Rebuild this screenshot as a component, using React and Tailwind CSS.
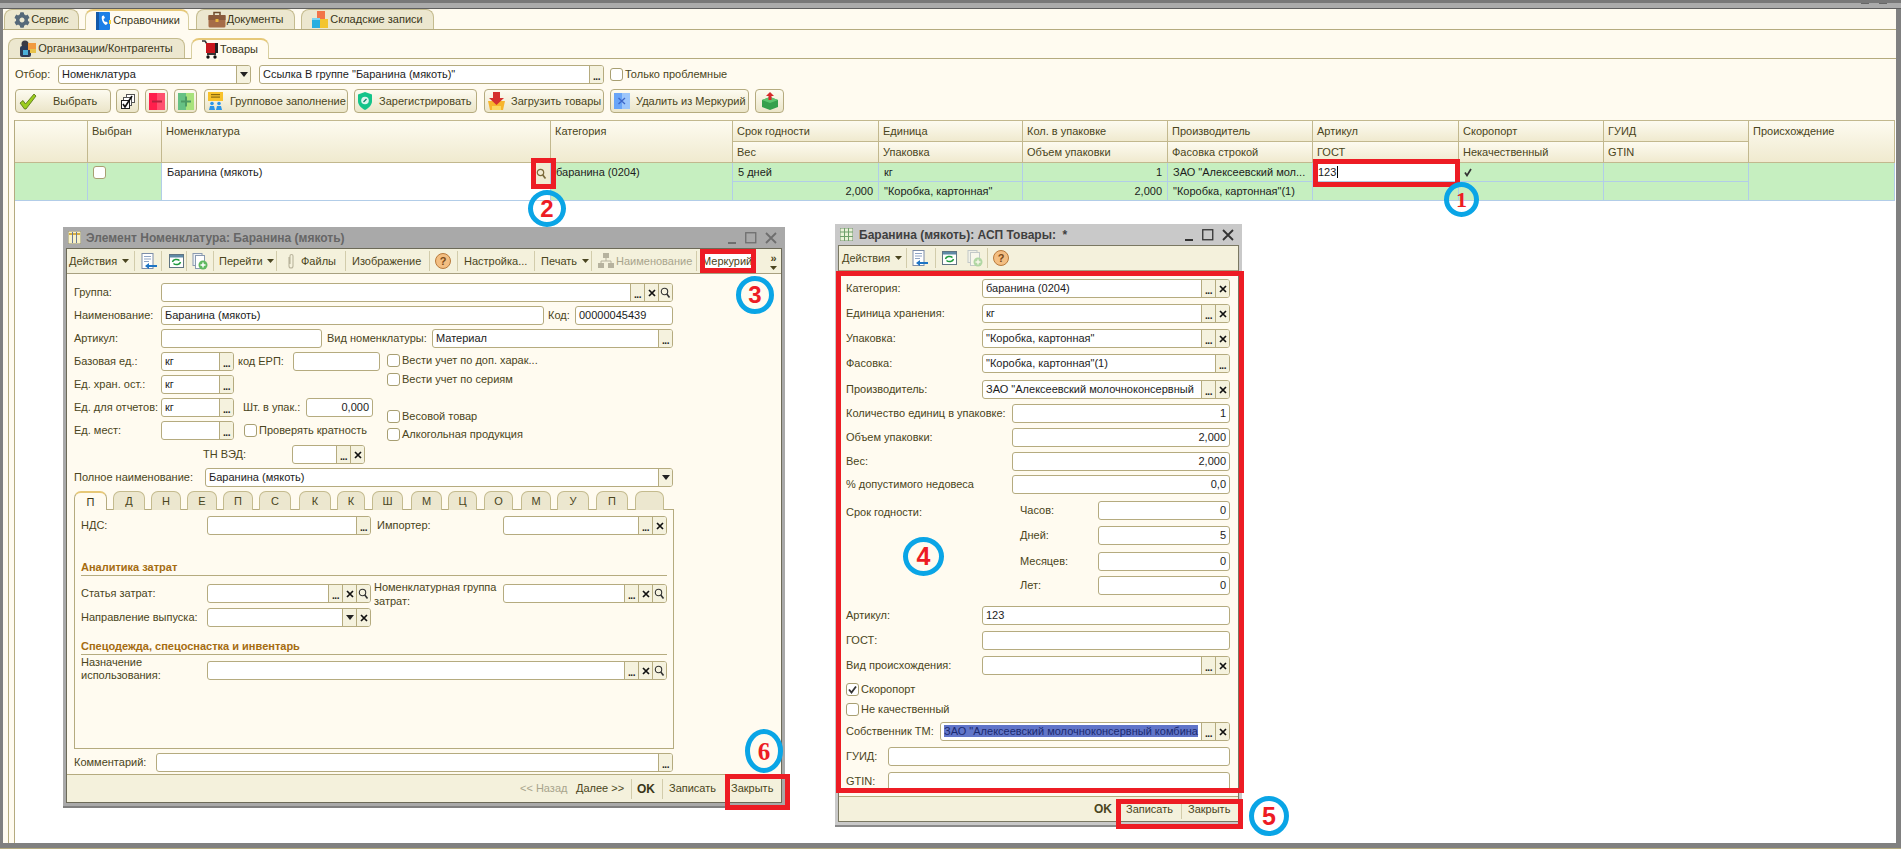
import React from "react";
import { FaCog } from "react-icons/fa";

const LBL = "text-[#4a4520] whitespace-nowrap leading-[19px]";

const Dots = () => (
  <div className="w-[14px] h-full border-l border-[#b5ab7f] bg-[#f5f2de] text-[#222] text-[10px] leading-[21px] text-center font-bold tracking-[-0.5px]">...</div>
);
const Cross = () => (
  <div className="w-[14px] h-full border-l border-[#b5ab7f] bg-[#f5f2de] flex items-center justify-center">
    <svg width="8" height="8" viewBox="0 0 8 8"><path d="M1 1L7 7M7 1L1 7" stroke="#111" strokeWidth="1.7" /></svg>
  </div>
);
const Lens = () => (
  <div className="w-[14px] h-full border-l border-[#b5ab7f] bg-[#f5f2de] flex items-center justify-center">
    <svg width="11" height="12" viewBox="0 0 11 12"><circle cx="4.5" cy="4.5" r="3.2" fill="none" stroke="#333" strokeWidth="1.1" /><path d="M6.8 7L9.5 10.5" stroke="#333" strokeWidth="1.6" /></svg>
  </div>
);
const Arrow = () => (
  <div className="w-[14px] h-full border-l border-[#b5ab7f] bg-[#f5f2de] flex items-center justify-center">
    <svg width="8" height="5" viewBox="0 0 8 5"><path d="M0 0H8L4 5Z" fill="#222" /></svg>
  </div>
);
const BTN = { d: Dots, x: Cross, l: Lens, a: Arrow };

function Field({ w, btns = "", right, children, sel }) {
  return (
    <div className={`${w} h-[19px] flex shrink-0 rounded-[3px] border border-[#b5ab7f] bg-white overflow-hidden`}>
      <div className={`flex-1 min-w-0 px-[3px] leading-[17px] text-[#1c1c1c] whitespace-nowrap overflow-hidden ${right ? "text-right" : ""}`}>
        {sel ? <span className="bg-[#6175c9] text-[#1b2a70]">{children}</span> : children}
      </div>
      {btns.split("").map((b, i) => {
        const C = BTN[b];
        return <C key={i} />;
      })}
    </div>
  );
}

const Box = ({ checked }) => (
  <span className="w-[13px] h-[13px] shrink-0 rounded-[3px] border border-[#a89f72] bg-white flex items-center justify-center">
    {checked && <svg width="9" height="9" viewBox="0 0 9 9"><path d="M1 4.5L3.5 7.5L8 1.5" fill="none" stroke="#333" strokeWidth="1.8" /></svg>}
  </span>
);
const Check = ({ mt = "", checked, children }) => (
  <div className={`flex items-center h-[13px] gap-[2px] ${mt}`}>
    <Box checked={checked} />
    <span className="text-[#4a4520] whitespace-nowrap">{children}</span>
  </div>
);

/* ---------- icons ---------- */
const IPhonebook = () => (
  <svg width="18" height="18" viewBox="0 0 18 18"><rect x="2" y="0" width="14" height="18" rx="1" fill="#1d7fe6" /><rect x="2" y="0" width="3" height="18" fill="#1259a8" /><path d="M8 4c-1 3 1 8 4 9l2-2-2-1.500-1 .5c-1-1-1.500-2-1.500-3L11 6 9.800 3.500Z" fill="#fff" /><rect x="15" y="8" width="2" height="4" fill="#f3d23a" /></svg>
);
const IBrief = () => (
  <svg width="18" height="17" viewBox="0 0 18 17"><path d="M6 4V1.500h6V4" fill="none" stroke="#6d4a2c" strokeWidth="1.500" /><rect x="0.500" y="4" width="17" height="12.500" rx="1.500" fill="#a56c48" /><rect x="0.500" y="4" width="17" height="5" fill="#8a5a3c" /><rect x="7.500" y="8" width="3" height="3" fill="#e9b63f" /></svg>
);
const IBlocks = () => (
  <svg width="17" height="17" viewBox="0 0 17 17"><rect x="5" y="0" width="8" height="8" fill="#f2744a" /><rect x="0" y="7" width="8" height="10" fill="#25aee0" /><rect x="8" y="8" width="8" height="9" fill="#f3c52f" /><rect x="0" y="7" width="8" height="2" fill="#7fd4f0" /></svg>
);
const IOrg = () => (
  <svg width="17" height="17" viewBox="0 0 17 17"><circle cx="5" cy="4" r="3.500" fill="#3a3a44" /><rect x="0" y="6" width="11" height="11" rx="2" fill="#2d3a55" /><rect x="8" y="3" width="8" height="7" fill="#f19a3e" /><rect x="3" y="10" width="5" height="5" fill="#4ab0d8" /><rect x="10" y="9" width="6" height="4" fill="#e8c24a" /></svg>
);
const ICart = () => (
  <svg width="17" height="19" viewBox="0 0 17 19"><path d="M0 1H3L5 4" fill="none" stroke="#333" strokeWidth="1.500" /><rect x="4" y="3" width="11" height="10" fill="#c8161c" /><rect x="13" y="3" width="3" height="10" fill="#222" /><rect x="5" y="13" width="9" height="2" fill="#333" /><circle cx="6" cy="17" r="1.700" fill="#111" /><circle cx="13" cy="17" r="1.700" fill="#111" /></svg>
);
const IOk = () => (
  <svg width="18" height="17" viewBox="0 0 18 17"><path d="M1 10L4 7.500L6.500 11L15 1L17 3L7 16H5.500Z" fill="#9ccc1e" stroke="#4f6d10" strokeWidth="0.800" /></svg>
);
const IMulti = () => (
  <svg width="16" height="17" viewBox="0 0 16 17"><rect x="6.500" y="1.500" width="8" height="8" fill="#fff" stroke="#555" /><rect x="3.500" y="4.500" width="8" height="8" fill="#fff" stroke="#555" /><rect x="1.500" y="7.500" width="8" height="8" fill="#fff" stroke="#222" /><path d="M3 11L5 14L12 3" fill="none" stroke="#111" strokeWidth="1.600" /></svg>
);
const IMinus = () => (
  <svg width="16" height="17" viewBox="0 0 16 17"><rect width="8" height="17" fill="#ff1f4c" /><rect x="8" width="8" height="17" fill="#ff4f6e" /><rect x="3" y="7.500" width="10" height="2" fill="#b3223e" /></svg>
);
const IPlus = () => (
  <svg width="16" height="17" viewBox="0 0 16 17"><rect width="8" height="17" fill="#66c184" /><rect x="8" width="8" height="17" fill="#a8e27c" /><rect x="3" y="7.500" width="10" height="2" fill="#4c9a63" /><rect x="7" y="3.500" width="2" height="10" fill="#4c9a63" /></svg>
);
const IGroup = () => (
  <svg width="15" height="18" viewBox="0 0 15 18"><rect width="15" height="9" fill="#f8c22c" /><rect x="3" y="2" width="9" height="1.200" fill="#8a6a10" /><rect x="3" y="4.500" width="9" height="1.200" fill="#8a6a10" /><circle cx="4" cy="11.500" r="1.800" fill="#2a95e8" /><circle cx="11" cy="11.500" r="1.800" fill="#2a95e8" /><path d="M1 18l1-4h4l1 4ZM8 18l1-4h4l1 4Z" fill="#2a95e8" /></svg>
);
const IShield = () => (
  <svg width="14" height="18" viewBox="0 0 14 18"><path d="M7 0L14 2.500V9c0 4-3 7-7 9-4-2-7-5-7-9V2.500Z" fill="#14c48a" /><circle cx="7" cy="8.500" r="3.800" fill="#dff5ee" /><path d="M5.500 10L8.500 7" stroke="#14806a" strokeWidth="1.200" /></svg>
);
const ILoad = () => (
  <svg width="17" height="18" viewBox="0 0 17 18"><path d="M0 9H17L15 18H2Z" fill="#f7b52c" /><path d="M4 14H13V18H4Z" fill="#fbd860" /><path d="M5 0H12V6H16L8.500 13L1 6H5Z" fill="#d5312f" /></svg>
);
const IDel = () => (
  <svg width="16" height="16" viewBox="0 0 16 16"><rect width="8" height="16" fill="#69a5f7" /><rect x="8" width="8" height="16" fill="#9cc6fb" /><path d="M4.500 5L11 11M11 5L4.500 11" stroke="#3c66c8" strokeWidth="1.300" /></svg>
);
const IBoxUp = () => (
  <svg width="16" height="18" viewBox="0 0 16 18"><path d="M0 8L8 5L16 8V15L8 18L0 15Z" fill="#34a04c" /><path d="M0 8L8 11L16 8L8 5Z" fill="#5cc56e" /><path d="M8 0L12 4H9.500V8H6.500V4H4Z" fill="#d62b2b" /></svg>
);
const IDocArrow = () => (
  <svg width="16" height="17" viewBox="0 0 16 17"><rect x="1" y="0.500" width="11" height="15" fill="#fff" stroke="#7c8da8" /><path d="M3 3.500H10M3 6H10M3 8.500H8" stroke="#8ea4c4" /><path d="M16 12H8V10L4 13L8 16V14H16Z" fill="#1d74c4" /></svg>
);
const IRefresh = () => (
  <svg width="15" height="14" viewBox="0 0 15 14"><rect x="0.500" y="0.500" width="14" height="13" fill="#fff" stroke="#5f7482" /><rect x="1" y="1" width="13" height="2.500" fill="#5f8aa6" /><path d="M3.500 8a4 3 0 0 1 7-1.500M11.500 8a4 3 0 0 1-7 1.500" fill="none" stroke="#1e9a3c" strokeWidth="1.500" /></svg>
);
const IDocPlus = ({ dim }) => (
  <svg width="16" height="17" viewBox="0 0 16 17" opacity={dim ? 0.45 : 1}><rect x="1" y="0.500" width="9" height="12" fill="#eef2f6" stroke="#8a9ab0" /><rect x="3.500" y="2.500" width="9" height="13" fill="#fff" stroke="#8a9ab0" /><circle cx="11" cy="12" r="4.500" fill="#5fb95f" /><path d="M8.500 12H13.500M11 9.500V14.500" stroke="#fff" strokeWidth="1.400" /></svg>
);
const IClip = () => (
  <svg width="8" height="17" viewBox="0 0 8 17"><path d="M2 4V13a2 2 0 0 0 4 0V3a1.500 1.500 0 0 0-3 0V11" fill="none" stroke="#b9b49c" strokeWidth="1.100" /></svg>
);
const IHelp = () => (
  <div className="w-[16px] h-[16px] rounded-full bg-[#f3be82] border border-[#b87a3c] flex items-center justify-center text-[11px] font-bold text-[#7a4a18] leading-none">?</div>
);
const ITree = () => (
  <svg width="16" height="16" viewBox="0 0 16 16" fill="#b6b29e"><rect x="5" y="0" width="6" height="5" /><rect x="0" y="10" width="6" height="5" /><rect x="10" y="10" width="6" height="5" /><path d="M8 5V8M3 10V8H13V10" fill="none" stroke="#b6b29e" /></svg>
);
const Caret = () => (
  <svg width="7" height="4" viewBox="0 0 7 4" className="shrink-0"><path d="M0 0H7L3.500 4Z" fill="#4a4520" /></svg>
);
const WinBtns = ({ color }) => (
  <div className="ml-auto flex items-center gap-[8px] pr-[2px]">
    <svg width="9" height="12" viewBox="0 0 9 12"><rect x="0" y="10" width="8" height="2" fill={color} /></svg>
    <svg width="12" height="12" viewBox="0 0 12 12"><rect x="0.750" y="0.750" width="10" height="10" fill="none" stroke={color} strokeWidth="1.300" /></svg>
    <svg width="12" height="12" viewBox="0 0 12 12"><path d="M1 1L11 11M11 1L1 11" stroke={color} strokeWidth="1.800" /></svg>
  </div>
);

/* ---------- main tabs ---------- */
function Tab({ w, active, children }) {
  return (
    <div className={`${w} ${active ? "h-[21px] bg-[#fffbf0] border-[#d8cfa0] border-t-[#e6c878] border-t-2 border-b-0" : "h-[20px] bg-[#ece7cf] border-[#c4bb8e]"} border border-b-0 rounded-t-[8px] flex items-center justify-center gap-[1px] shrink-0 z-10 text-[#3a3618] whitespace-nowrap`}>
      {children}
    </div>
  );
}
function TBtn({ w, pl = "pl-[3px]", gap = "gap-[3px]", children }) {
  return (
    <div className={`${w} ${pl} ${gap} h-[24px] shrink-0 flex items-center rounded-[4px] border border-[#b5ab7f] bg-linear-to-b from-[#fdfbf0] to-[#ebe5c9] text-[#4a4520] whitespace-nowrap`}>
      {children}
    </div>
  );
}

/* ---------- grid ---------- */
const H = "border-r border-b border-[#c2b88e] bg-linear-to-b from-[#fdfbf0] to-[#f0eacf] pl-[4px] leading-[21px] text-[#4a4520] whitespace-nowrap overflow-hidden";
const D = "border-r border-b border-[#b2cde8] bg-[#c6efc0] px-[5px] leading-[18px] text-[#1c1c1c] whitespace-nowrap overflow-hidden";

function Grid() {
  const top = ["Срок годности", "Единица", "Кол. в упаковке", "Производитель", "Артикул", "Скоропорт", "ГУИД"];
  const low = ["Вес", "Упаковка", "Объем упаковки", "Фасовка строкой", "ГОСТ", "Некачественный", "GTIN"];
  return (
    <div className="grid grid-cols-[73px_74px_389px_182px_146px_144px_145px_145px_146px_145px_145px_146px] grid-rows-[21px_21px_19px_19px] border-t border-[#c2b88e] w-[1880px] shrink-0">
      <div className={`${H} row-span-2`} />
      <div className={`${H} row-span-2`}>Выбран</div>
      <div className={`${H} row-span-2`}>Номенклатура</div>
      <div className={`${H} row-span-2`}>Категория</div>
      {top.map((t) => <div key={t} className={H}>{t}</div>)}
      <div className={`${H} row-span-2`}>Происхождение</div>
      {low.map((t) => <div key={t} className={H}>{t}</div>)}

      <div className={`${D} row-span-2`} />
      <div className={`${D} row-span-2 flex items-start pt-[3px]`}><Box /></div>
      <div className="row-span-2 border-r border-b border-[#b2cde8] bg-white pl-[5px] leading-[18px] text-[#1c1c1c] flex justify-between">
        <span>Баранина (мякоть)</span>
        <div className="w-[18px] h-[21px] bg-[#f0ebd2] flex items-center justify-center">
          <svg width="11" height="12" viewBox="0 0 11 12"><circle cx="4.500" cy="4.500" r="3.200" fill="none" stroke="#7a6a3a" strokeWidth="1.200" /><path d="M6.800 7L9.500 10.500" stroke="#7a6a3a" strokeWidth="1.700" /></svg>
        </div>
      </div>
      <div className={`${D} row-span-2`}>баранина (0204)</div>
      <div className={D}>5 дней</div>
      <div className={D}>кг</div>
      <div className={`${D} text-right`}>1</div>
      <div className={D}>ЗАО "Алексеевский мол...</div>
      <div className="bg-white border-r border-b border-[#b2cde8] pl-[5px] leading-[18px] text-[#1c1c1c]">123<span className="border-l border-black ml-[1px]" /></div>
      <div className={`${D} flex items-center`}><svg width="8" height="9" viewBox="0 0 8 9"><path d="M1 4.500L3 7.500L7 1" fill="none" stroke="#333" strokeWidth="1.700" /></svg></div>
      <div className={D} />
      <div className={`${D} row-span-2`} />
      <div className={`${D} text-right`}>2,000</div>
      <div className={D}>"Коробка, картонная"</div>
      <div className={`${D} text-right`}>2,000</div>
      <div className={D}>"Коробка, картонная"(1)</div>
      <div className={D} />
      <div className={D} />
      <div className={D} />
    </div>
  );
}

/* ---------- window 1 ---------- */
const Sep = () => <div className="w-px h-[20px] bg-[#d2ccab] shrink-0" />;
function Seg({ w, pl = "pl-[5px]", gap = "gap-[3px]", children }) {
  return <div className={`${w} ${pl} ${gap} flex items-center shrink-0 whitespace-nowrap text-[#4a4520]`}>{children}</div>;
}
function Toolbar1() {
  return (
    <div className="h-[25px] shrink-0 flex items-center bg-[#f4f1dc] border-b border-[#a8a080]">
      <Seg w="w-[67px]" pl="pl-[2px]" gap="gap-[5px]">Действия <Caret /></Seg><Sep />
      <Seg w="w-[26px]" pl="pl-[6px]"><IDocArrow /></Seg><Sep />
      <Seg w="w-[24px]" pl="pl-[7px]"><IRefresh /></Seg><Sep />
      <Seg w="w-[26px]" pl="pl-[5px]"><IDocPlus /></Seg><Sep />
      <Seg w="w-[62px]" pl="pl-[5px]" gap="gap-[4px]">Перейти <Caret /></Seg><Sep />
      <Seg w="w-[68px]" pl="pl-[10px]" gap="gap-[6px]"><IClip />Файлы</Seg><Sep />
      <Seg w="w-[83px]" pl="pl-[6px]">Изображение</Seg><Sep />
      <Seg w="w-[27px]" pl="pl-[5px]"><IHelp /></Seg><Sep />
      <Seg w="w-[76px]" pl="pl-[6px]">Настройка...</Seg><Sep />
      <Seg w="w-[56px]" pl="pl-[6px]" gap="gap-[5px]">Печать <Caret /></Seg><Sep />
      <Seg w="w-[104px]" pl="pl-[6px]" gap="gap-[2px]"><ITree /><span className="text-[#a8a48c]">Наименование</span></Seg><Sep />
      <Seg w="w-[58px]" pl="pl-[5px]"><span className="bg-white">Меркурий</span></Seg>
      <div className="ml-[15px] flex flex-col items-center gap-[3px] leading-[10px] text-[#4a4520]">
        <span className="text-[11px] font-bold">»</span>
        <Caret />
      </div>
    </div>
  );
}
const Letters = [
  ["П", "w-[33px] mr-[6px]", true], ["Д", "w-[32px] mr-[6px]"], ["Н", "w-[30px] mr-[6px]"], ["Е", "w-[30px] mr-[6px]"],
  ["П", "w-[30px] mr-[6px]"], ["С", "w-[32px] mr-[8px]"], ["К", "w-[32px] mr-[6px]"], ["К", "w-[28px] mr-[7px]"],
  ["Ш", "w-[31px] mr-[8px]"], ["М", "w-[31px] mr-[6px]"], ["Ц", "w-[29px] mr-[7px]"], ["О", "w-[29px] mr-[8px]"],
  ["М", "w-[30px] mr-[6px]"], ["У", "w-[32px] mr-[7px]"], ["П", "w-[32px] mr-[7px]"], ["", "w-[29px]"],
];
function Window1() {
  return (
    <div className="absolute left-[63px] top-[227px] w-[722px] h-[581px] flex flex-col bg-[#a9a9a9] border-b-2 border-[#808080]">
      <div className="h-[21px] shrink-0 flex items-center pl-[5px] pr-[6px] gap-[5px]">
        <svg width="13" height="13" viewBox="0 0 13 13"><rect width="13" height="13" fill="#f8f2c8" stroke="#8d8a6e" /><path d="M1 3H12" stroke="#d8b040" strokeWidth="2" /><path d="M4.500 1V12M8.500 1V12" stroke="#6a7a9a" /></svg>
        <span className="font-bold text-[12px] text-[#666] whitespace-nowrap">Элемент Номенклатура: Баранина (мякоть)</span>
        <WinBtns color="#6e6e6e" />
      </div>
      <div className="mx-[3px] flex-1 flex flex-col border border-[#6c6a58] bg-[#fffbf0] min-h-0">
        <Toolbar1 />
        <div className="flex-1 pl-[7px] pt-[9px] flex flex-col min-h-0">
          <div className="flex h-[19px]"><span className={`${LBL} w-[87px]`}>Группа:</span><Field w="w-[512px]" btns="dxl" /></div>
          <div className="flex h-[19px] mt-[4px]"><span className={`${LBL} w-[87px]`}>Наименование:</span><Field w="w-[383px]">Баранина (мякоть)</Field><span className={`${LBL} ml-[4px] w-[27px]`}>Код:</span><Field w="w-[98px]">00000045439</Field></div>
          <div className="flex h-[19px] mt-[4px]"><span className={`${LBL} w-[87px]`}>Артикул:</span><Field w="w-[161px]" /><span className={`${LBL} ml-[5px] w-[105px]`}>Вид номенклатуры:</span><Field w="w-[241px]" btns="d">Материал</Field></div>
          <div className="flex mt-[4px]">
            <div className="w-[313px] shrink-0 flex flex-col gap-[4px]">
              <div className="flex h-[19px]"><span className={`${LBL} w-[87px]`}>Базовая ед.:</span><Field w="w-[73px]" btns="d">кг</Field><span className={`${LBL} ml-[4px] w-[55px]`}>код ЕРП:</span><Field w="w-[87px]" /></div>
              <div className="flex h-[19px]"><span className={`${LBL} w-[87px]`}>Ед. хран. ост.:</span><Field w="w-[73px]" btns="d">кг</Field></div>
              <div className="flex h-[19px]"><span className={`${LBL} w-[87px]`}>Ед. для отчетов:</span><Field w="w-[73px]" btns="d">кг</Field><span className={`${LBL} ml-[9px] w-[63px]`}>Шт. в упак.:</span><Field w="w-[67px]" right>0,000</Field></div>
              <div className="flex h-[19px]"><span className={`${LBL} w-[87px]`}>Ед. мест:</span><Field w="w-[73px]" btns="d" /><div className="ml-[10px] pt-[3px]"><Check>Проверять кратность</Check></div></div>
            </div>
            <div className="flex flex-col">
              <Check mt="mt-[2px]">Вести учет по доп.  харак...</Check>
              <Check mt="mt-[6px]">Вести учет по сериям</Check>
              <Check mt="mt-[24px]">Весовой товар</Check>
              <Check mt="mt-[5px]">Алкогольная продукция</Check>
            </div>
          </div>
          <div className="flex h-[19px] mt-[4px] ml-[129px]"><span className={`${LBL} w-[89px]`}>ТН ВЭД:</span><Field w="w-[73px]" btns="dx" /></div>
          <div className="flex h-[19px] mt-[4px]"><span className={`${LBL} w-[131px]`}>Полное наименование:</span><Field w="w-[468px]" btns="a">Баранина (мякоть)</Field></div>

          <div className="flex h-[19px] mt-[4px] relative z-10">
            {Letters.map(([t, w, a], i) => (
              <div key={i} className={`${w} shrink-0 h-[19px] rounded-t-[7px] border border-b-0 text-center leading-[18px] ${a ? "bg-[#fffbf0] border-[#b5ab7f] border-t-[#e6c878] border-t-2 text-[#3a3618]" : "bg-[#ece7cf] border-[#c4bb8e] text-[#4a4520] h-[18px]"}`}>{t}</div>
            ))}
          </div>
          <div className="w-[600px] h-[240px] -mt-px border border-[#b5ab7f] pl-[6px] pt-[6px] shrink-0">
            <div className="flex h-[19px]"><span className={`${LBL} w-[126px]`}>НДС:</span><Field w="w-[164px]" btns="d" /><span className={`${LBL} ml-[6px] w-[126px]`}>Импортер:</span><Field w="w-[164px]" btns="dx" /></div>
            <div className="w-[586px] h-[15px] mt-[26px] border-b border-[#b5ab7f] font-bold text-[#a56c10] leading-[13px]">Аналитика затрат</div>
            <div className="flex h-[19px] mt-[8px]"><span className={`${LBL} w-[126px]`}>Статья затрат:</span><Field w="w-[164px]" btns="dxl" /><span className="ml-[3px] w-[129px] -mt-[4px] h-[28px] text-[#4a4520] leading-[14px]">Номенклатурная группа затрат:</span><Field w="w-[164px]" btns="dxl" /></div>
            <div className="flex h-[19px] mt-[5px]"><span className={`${LBL} w-[126px]`}>Направление выпуска:</span><Field w="w-[164px]" btns="ax" /></div>
            <div className="w-[586px] h-[15px] mt-[13px] border-b border-[#b5ab7f] font-bold text-[#a56c10] leading-[13px]">Спецодежда, спецоснастка и инвентарь</div>
            <div className="flex h-[19px] mt-[6px]"><span className="w-[126px] -mt-[5px] h-[28px] text-[#4a4520] leading-[13px]">Назначение использования:</span><Field w="w-[460px]" btns="dxl" /></div>
          </div>
          <div className="flex h-[19px] mt-[4px]"><span className={`${LBL} w-[82px]`}>Комментарий:</span><Field w="w-[517px]" btns="d" /></div>
        </div>
        <div className="h-[28px] shrink-0 bg-[#f4f1dc] border-t border-[#b5ab7f] flex items-center pl-[453px] text-[#4a4520]">
          <span className="w-[56px] text-[#a8a48c]">&lt;&lt; Назад</span>
          <span className="w-[55px]">Далее &gt;&gt;</span>
          <Sep />
          <span className="w-[30px] pl-[5px] font-bold text-[12px] text-[#3a3618]">OK</span>
          <Sep />
          <span className="w-[62px] pl-[6px]">Записать</span>
          <span className="pl-[6px]">Закрыть</span>
        </div>
      </div>
      <div className="h-[3px] shrink-0" />
    </div>
  );
}

/* ---------- window 2 ---------- */
function R({ mt, label, lw = "w-[136px]", children }) {
  return (
    <div className={`flex h-[19px] shrink-0 ${mt}`}>
      <span className={`${LBL} ${lw}`}>{label}</span>
      {children}
    </div>
  );
}
function Window2() {
  return (
    <div className="absolute left-[835px] top-[224px] w-[407px] h-[603px] flex flex-col bg-[#c9c9c9] border-b-2 border-[#8a8a8a]">
      <div className="h-[21px] shrink-0 flex items-center pl-[5px] pr-[6px] gap-[6px]">
        <svg width="13" height="13" viewBox="0 0 13 13"><rect width="13" height="13" fill="#eaf2d8" stroke="#6f8f6a" /><path d="M0 4H13M0 8.500H13M4.500 0V13M8.500 0V13" stroke="#6f9f6a" /></svg>
        <span className="font-bold text-[12px] text-[#3f3f3f] whitespace-pre">Баранина (мякоть): АСП Товары:  *</span>
        <WinBtns color="#333" />
      </div>
      <div className="mx-[3px] flex-1 min-h-0 flex flex-col border border-[#7a7862] bg-[#fffbf0]">
        <div className="h-[25px] shrink-0 flex items-center bg-[#f4f1dc] border-b border-[#a8a080]">
          <Seg w="w-[67px]" pl="pl-[3px]" gap="gap-[5px]">Действия <Caret /></Seg><Sep />
          <Seg w="w-[28px]" pl="pl-[5px]"><IDocArrow /></Seg><Sep />
          <Seg w="w-[26px]" pl="pl-[6px]"><IRefresh /></Seg>
          <Seg w="w-[25px]" pl="pl-[5px]"><IDocPlus dim /></Seg><Sep />
          <Seg w="w-[27px]" pl="pl-[5px]"><IHelp /></Seg>
        </div>
        <div className="flex-1 min-h-0 overflow-hidden flex flex-col pl-[7px] pt-[8px]">
          <R mt="" label="Категория:"><Field w="w-[248px]" btns="dx">баранина (0204)</Field></R>
          <R mt="mt-[6px]" label="Единица хранения:"><Field w="w-[248px]" btns="dx">кг</Field></R>
          <R mt="mt-[6px]" label="Упаковка:"><Field w="w-[248px]" btns="dx">"Коробка, картонная"</Field></R>
          <R mt="mt-[6px]" label="Фасовка:"><Field w="w-[248px]" btns="d">"Коробка, картонная"(1)</Field></R>
          <R mt="mt-[7px]" label="Производитель:"><Field w="w-[248px]" btns="dx">ЗАО "Алексеевский молочноконсервный</Field></R>
          <R mt="mt-[5px]" label="Количество единиц в упаковке:" lw="w-[166px]"><Field w="w-[218px]" right>1</Field></R>
          <R mt="mt-[5px]" label="Объем упаковки:" lw="w-[166px]"><Field w="w-[218px]" right>2,000</Field></R>
          <R mt="mt-[5px]" label="Вес:" lw="w-[166px]"><Field w="w-[218px]" right>2,000</Field></R>
          <R mt="mt-[4px]" label="% допустимого недовеса" lw="w-[166px]"><Field w="w-[218px]" right>0,0</Field></R>
          <div className="flex h-[19px] mt-[7px] shrink-0"><span className={`${LBL} w-[174px] mt-[2px]`}>Срок годности:</span><span className={`${LBL} w-[78px]`}>Часов:</span><Field w="w-[132px]" right>0</Field></div>
          <div className="flex h-[19px] mt-[6px] shrink-0 pl-[174px]"><span className={`${LBL} w-[78px]`}>Дней:</span><Field w="w-[132px]" right>5</Field></div>
          <div className="flex h-[19px] mt-[7px] shrink-0 pl-[174px]"><span className={`${LBL} w-[78px]`}>Месяцев:</span><Field w="w-[132px]" right>0</Field></div>
          <div className="flex h-[19px] mt-[5px] shrink-0 pl-[174px]"><span className={`${LBL} w-[78px]`}>Лет:</span><Field w="w-[132px]" right>0</Field></div>
          <R mt="mt-[11px]" label="Артикул:"><Field w="w-[248px]">123</Field></R>
          <R mt="mt-[6px]" label="ГОСТ:"><Field w="w-[248px]" /></R>
          <R mt="mt-[6px]" label="Вид происхождения:"><Field w="w-[248px]" btns="dx" /></R>
          <Check mt="mt-[8px] shrink-0" checked>Скоропорт</Check>
          <Check mt="mt-[7px] shrink-0">Не качественный</Check>
          <R mt="mt-[6px]" label="Собственник ТМ:" lw="w-[94px]"><Field w="w-[290px]" btns="dx" sel>ЗАО "Алексеевский молочноконсервный комбина</Field></R>
          <R mt="mt-[6px]" label="ГУИД:" lw="w-[42px]"><Field w="w-[342px]" /></R>
          <R mt="mt-[6px]" label="GTIN:" lw="w-[42px]"><Field w="w-[342px]" /></R>
        </div>
        <div className="h-[25px] shrink-0 bg-[#f4f1dc] border-t border-[#b5ab7f] flex items-center pl-[255px] text-[#4a4520]">
          <span className="w-[32px] font-bold text-[12px]">OK</span>
          <span className="w-[55px]">Записать</span>
          <Sep />
          <span className="pl-[6px]">Закрыть</span>
        </div>
      </div>
      <div className="h-[3px] shrink-0" />
    </div>
  );
}

/* ---------- annotations ---------- */
const RED = "absolute border-[5px] border-[#ed1c24] pointer-events-none z-40";
const CIRC = "absolute rounded-[50%] border-[5px] border-[#0aa5e6] flex items-center justify-center font-bold text-[#ed1c24] leading-none z-50";

export default function App() {
  return (
    <div className="relative w-[1901px] h-[849px] overflow-hidden bg-[#808080] flex flex-col text-[11px] font-['Liberation_Sans',Arial,sans-serif]">
      <div className="h-[9px] shrink-0 border-t-[3px] border-[#787878] border-b border-b-[#5f5f5f] bg-[#ababab] flex justify-end gap-[10px] pr-[14px]">
        <div className="w-[8px] h-px bg-[#666]" /><div className="w-[8px] h-px bg-[#666]" />
      </div>
      <div className="flex-1 min-h-0 ml-[3px] mr-[5px] bg-[#fffbf0] flex flex-col">
        <div className="h-[21px] shrink-0 border-b border-[#b5ab7f] flex pl-[1px] gap-[6px] items-start">
          <Tab w="w-[75px]"><FaCog className="text-[#56697a] text-[16px]" />Сервис</Tab>
          <Tab w="w-[104px]" active><IPhonebook />Справочники</Tab>
          <Tab w="w-[99px] ml-[1px]"><IBrief />Документы</Tab>
          <Tab w="w-[133px]"><IBlocks />Складские записи</Tab>
        </div>
        <div className="flex-1 min-h-0 pt-[8px] pl-[5px] flex flex-col">
          <div className="h-[21px] shrink-0 border-b border-[#b5ab7f] flex gap-[6px] items-start">
            <Tab w="w-[177px]"><IOrg />Организации/Контрагенты</Tab>
            <Tab w="w-[78px]" active><ICart />Товары</Tab>
          </div>
          <div className="flex-1 min-h-0 border-l border-[#b5ab7f] pl-[6px] flex flex-col">
            <div className="flex h-[19px] mt-[6px] shrink-0">
              <span className={`${LBL} w-[43px]`}>Отбор:</span>
              <Field w="w-[193px]" btns="a">Номенклатура</Field>
              <div className="w-[8px]" />
              <Field w="w-[345px]" btns="d">Ссылка В группе "Баранина (мякоть)"</Field>
              <div className="ml-[6px] flex items-center"><Check>Только проблемные</Check></div>
            </div>
            <div className="flex mt-[5px] shrink-0">
              <TBtn w="w-[96px]" gap="gap-[16px]"><IOk />Выбрать</TBtn>
              <div className="w-[5px]" />
              <TBtn w="w-[23px]"><IMulti /></TBtn>
              <div className="w-[6px]" />
              <TBtn w="w-[23px]"><IMinus /></TBtn>
              <div className="w-[6px]" />
              <TBtn w="w-[23px]"><IPlus /></TBtn>
              <div className="w-[7px]" />
              <TBtn w="w-[144px]" gap="gap-[7px]"><IGroup />Групповое заполнение</TBtn>
              <div className="w-[6px]" />
              <TBtn w="w-[123px]" gap="gap-[7px]"><IShield />Зарегистрировать</TBtn>
              <div className="w-[7px]" />
              <TBtn w="w-[120px]" gap="gap-[6px]"><ILoad />Загрузить товары</TBtn>
              <div className="w-[6px]" />
              <TBtn w="w-[139px]" gap="gap-[6px]"><IDel />Удалить из Меркурий</TBtn>
              <div className="w-[6px]" />
              <TBtn w="w-[29px]" pl="pl-[6px]"><IBoxUp /></TBtn>
            </div>
            <div className="flex-1 min-h-0 mt-[7px] -ml-px bg-white border-l border-[#b5ab7f] flex flex-col">
              <Grid />
            </div>
          </div>
        </div>
      </div>
      <div className="h-[6px] shrink-0 border-b border-[#b5ab7f]" />

      <Window1 />
      <Window2 />

      <div className={`${RED} left-[1313px] top-[159px] w-[147px] h-[28px]`} />
      <div className={`${RED} left-[531px] top-[158px] w-[25px] h-[31px]`} />
      <div className={`${RED} left-[700px] top-[249px] w-[56px] h-[24px]`} />
      <div className={`${RED} left-[836px] top-[271px] w-[408px] h-[522px]`} />
      <div className={`${RED} left-[1116px] top-[799px] w-[127px] h-[30px]`} />
      <div className={`${RED} left-[725px] top-[774px] w-[65px] h-[36px]`} />

      <div className={`${CIRC} left-[1444px] top-[182px] w-[35px] h-[35px] text-[22px] font-['Liberation_Serif',serif]`}>1</div>
      <div className={`${CIRC} left-[528px] top-[190px] w-[38px] h-[37px] text-[24px]`}>2</div>
      <div className={`${CIRC} left-[736px] top-[276px] w-[38px] h-[38px] text-[24px]`}>3</div>
      <div className={`${CIRC} left-[903px] top-[537px] w-[41px] h-[39px] text-[25px]`}>4</div>
      <div className={`${CIRC} left-[1249px] top-[796px] w-[40px] h-[40px] text-[25px]`}>5</div>
      <div className={`${CIRC} left-[745px] top-[729px] w-[38px] h-[44px] text-[25px] font-['Liberation_Serif',serif]`}>6</div>
    </div>
  );
}
